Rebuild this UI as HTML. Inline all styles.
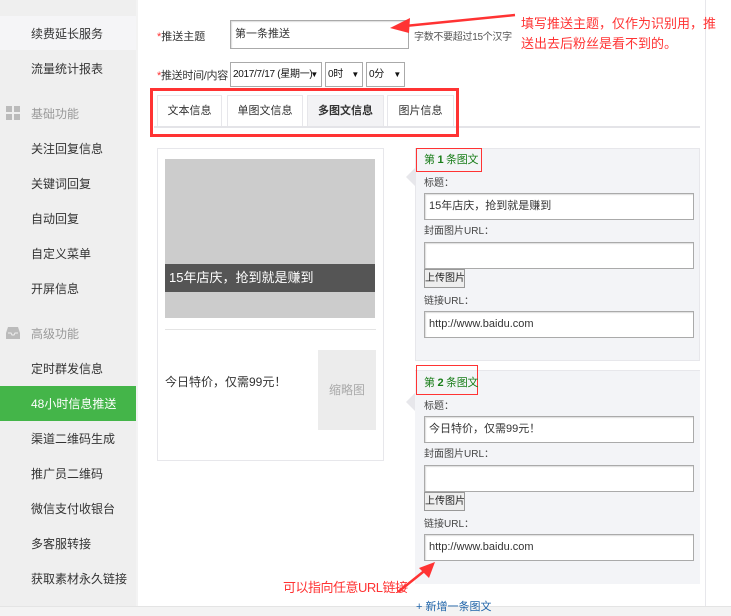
<!DOCTYPE html>
<html><head><meta charset="utf-8"><style>
*{margin:0;padding:0;box-sizing:border-box;white-space:nowrap}
body{width:731px;height:616px;position:relative;overflow:hidden;background:#fff;font-family:"Liberation Sans","Noto Sans CJK SC",sans-serif;font-size:12px;color:#333}
.a{position:absolute}
.side{left:0;top:0;width:136px;height:606px;background:#efefef}
.si{position:absolute;left:31px;font-size:12px;color:#333;line-height:14px}
.sh{color:#999}
.inp{position:absolute;background:#fff;border:1px solid #aaa;box-shadow:inset 1px 1px 1px #ddd;font-size:11px;padding-left:4px;line-height:24px;color:#333;overflow:hidden}
.sel{position:absolute;background:#fff;border:1px solid #aaa;font-size:10px;color:#111;line-height:23px;padding-left:2px;overflow:hidden;letter-spacing:-0.3px}
.sel:after{content:"▼";position:absolute;right:3px;top:0;font-size:8px}
.tab{position:absolute;top:95px;height:31px;background:#fff;border:1px solid #e7e7eb;border-bottom:none;text-align:center;line-height:30px;font-size:11px;color:#333}
.lbl{position:absolute;left:424px;font-size:10px;color:#444;line-height:12px}
.btn{position:absolute;left:424px;width:41px;height:19px;background:#eee;border:1px solid #999;font-size:10px;line-height:17px;text-align:center;color:#222;overflow:hidden}
.red{color:#f33}
</style></head><body>
<div class="a side"></div>
<div class="a" style="left:0;top:16px;width:136px;height:34px;background:#f5f5f7"></div>
<div class="a" style="left:136px;top:0;width:2px;height:606px;background:#f3f3f3"></div>
<div class="si" style="top:27px">续费延长服务</div>
<div class="si" style="top:62px">流量统计报表</div>
<div class="a" style="left:6px;top:106px;width:6px;height:6px;background:#bbb;box-shadow:8px 0 #bbb,0 8px #bbb,8px 8px #bbb"></div>
<div class="si sh" style="top:107px">基础功能</div>
<div class="si" style="top:142px">关注回复信息</div>
<div class="si" style="top:177px">关键词回复</div>
<div class="si" style="top:212px">自动回复</div>
<div class="si" style="top:247px">自定义菜单</div>
<div class="si" style="top:282px">开屏信息</div>
<svg class="a" style="left:6px;top:326px" width="14" height="14"><path d="M2 1h10l2 6v6H0V7z" fill="#bbb"/><path d="M2 7h3l1 2h2l1-2h3" stroke="#efefef" fill="none"/></svg>
<div class="si sh" style="top:327px">高级功能</div>
<div class="si" style="top:362px">定时群发信息</div>
<div class="a" style="left:0;top:386px;width:136px;height:35px;background:#44b549"></div>
<div class="si" style="top:397px;color:#fff">48小时信息推送</div>
<div class="si" style="top:432px">渠道二维码生成</div>
<div class="si" style="top:467px">推广员二维码</div>
<div class="si" style="top:502px">微信支付收银台</div>
<div class="si" style="top:537px">多客服转接</div>
<div class="si" style="top:572px">获取素材永久链接</div>
<div class="a" style="left:0;top:606px;width:731px;height:10px;background:#f3f3f3;border-top:1px solid #e4e4e4"></div>
<div class="a" style="left:705px;top:0;width:1px;height:606px;background:#e7e7eb"></div>

<div class="a" style="left:157px;top:28px;font-size:11px"><span class="red">*</span>推送主题</div>
<div class="inp" style="left:230px;top:20px;width:179px;height:29px;line-height:27px">第一条推送</div>
<div class="a" style="left:414px;top:28px;font-size:10px;color:#555;letter-spacing:-0.3px">字数不要超过15个汉字</div>
<div class="a" style="left:157px;top:67px;font-size:11px;letter-spacing:-0.3px"><span class="red">*</span>推送时间/内容</div>
<div class="sel" style="left:230px;top:62px;width:92px;height:25px;padding-right:14px">2017/7/17 (星期一)</div>
<div class="sel" style="left:325px;top:62px;width:38px;height:25px">0时</div>
<div class="sel" style="left:366px;top:62px;width:39px;height:25px">0分</div>
<svg class="a" style="left:385px;top:10px" width="135" height="25"><path d="M130 5 L20 16" stroke="#f33" stroke-width="2.5"/><path d="M5 18 L25 8 L24 23z" fill="#f33"/></svg>
<div class="a red" style="left:521px;top:14px;font-size:13px;line-height:20px;white-space:normal;width:205px">填写推送主题，仅作为识别用，推送出去后粉丝是看不到的。</div>

<div class="a" style="left:154px;top:126px;width:546px;height:2px;background:#e4e4e8"></div>
<div class="tab" style="left:157px;width:65px">文本信息</div>
<div class="tab" style="left:227px;width:76px">单图文信息</div>
<div class="tab" style="left:307px;width:77px;background:#f3f3f5;font-weight:bold">多图文信息</div>
<div class="tab" style="left:387px;width:67px">图片信息</div>
<div class="a" style="left:150px;top:88px;width:309px;height:49px;border:3px solid #f33"></div>

<div class="a" style="left:157px;top:148px;width:227px;height:313px;border:1px solid #e7e7eb"></div>
<div class="a" style="left:165px;top:159px;width:210px;height:159px;background:#cccccc"></div>
<div class="a" style="left:165px;top:264px;width:210px;height:28px;background:#555;color:#fff;font-size:13px;line-height:28px;padding-left:4px">15年店庆，抢到就是赚到</div>
<div class="a" style="left:165px;top:329px;width:211px;height:1px;background:#e4e4e4"></div>
<div class="a" style="left:165px;top:373px;font-size:12px">今日特价，仅需99元！</div>
<div class="a" style="left:318px;top:350px;width:58px;height:80px;background:#ececec;color:#aaa;text-align:center;line-height:80px;font-size:12px">缩略图</div>

<div class="a" style="left:415px;top:148px;width:285px;height:213px;background:#f3f4f7;border:1px solid #e7e7eb"></div>
<div class="a" style="left:406px;top:168px;width:0;height:0;border:9px solid transparent;border-right-color:#e7e7eb;border-left:0"></div>
<div class="a" style="left:416px;top:148px;width:66px;height:24px;border:1px solid #f33;color:#1a7e1a;font-size:11px;line-height:22px;padding-left:7px;letter-spacing:-0.3px">第 <b>1</b> 条图文</div>
<div class="lbl" style="top:178px">标题：</div>
<div class="inp" style="left:424px;top:193px;width:270px;height:27px">15年店庆，抢到就是赚到</div>
<div class="lbl" style="top:226px">封面图片URL：</div>
<div class="inp" style="left:424px;top:242px;width:270px;height:27px"></div>
<div class="btn" style="top:269px">上传图片</div>
<div class="lbl" style="top:296px">链接URL：</div>
<div class="inp" style="left:424px;top:311px;width:270px;height:27px">http://www.baidu.com</div>

<div class="a" style="left:415px;top:370px;width:285px;height:214px;background:#f3f4f7;border-top:1px solid #e7e7eb"></div>
<div class="a" style="left:406px;top:393px;width:0;height:0;border:9px solid transparent;border-right-color:#e7e7eb;border-left:0"></div>
<div class="a" style="left:416px;top:365px;width:62px;height:30px;border:1px solid #f33;color:#1a7e1a;font-size:11px;line-height:34px;padding-left:7px;letter-spacing:-0.3px">第 <b>2</b> 条图文</div>
<div class="lbl" style="top:401px">标题：</div>
<div class="inp" style="left:424px;top:416px;width:270px;height:27px">今日特价，仅需99元！</div>
<div class="lbl" style="top:449px">封面图片URL：</div>
<div class="inp" style="left:424px;top:465px;width:270px;height:27px"></div>
<div class="btn" style="top:492px">上传图片</div>
<div class="lbl" style="top:519px">链接URL：</div>
<div class="inp" style="left:424px;top:534px;width:270px;height:27px">http://www.baidu.com</div>

<svg class="a" style="left:395px;top:560px" width="45" height="35"><path d="M3 32 L33 8" stroke="#f33" stroke-width="2.5"/><path d="M40 2 L24 8 L34 18z" fill="#f33"/></svg>
<div class="a red" style="left:283px;top:577px;font-size:13px;letter-spacing:-0.5px">可以指向任意URL链接</div>
<div class="a" style="left:416px;top:598px;font-size:11px;color:#2266aa">+ 新增一条图文</div>
</body></html>
